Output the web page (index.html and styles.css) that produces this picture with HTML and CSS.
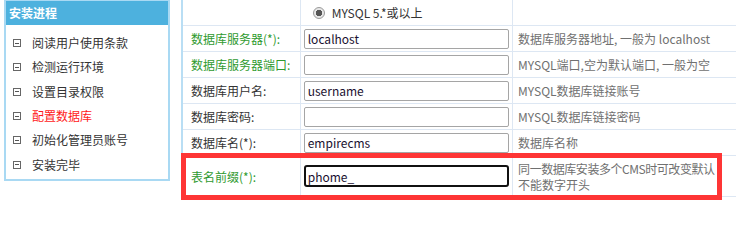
FILE: index.html
```html
<!DOCTYPE html>
<html lang="zh">
<head>
<meta charset="utf-8">
<title>安装进程</title>
<link rel="stylesheet" href="styles.css">
</head>
<body>
<div class="page">
  <aside class="side">
    <div class="side-head">安装进程</div>
    <ul class="steps">
      <li><span class="box"></span>阅读用户使用条款</li>
      <li><span class="box"></span>检测运行环境</li>
      <li><span class="box"></span>设置目录权限</li>
      <li class="cur"><span class="box"></span>配置数据库</li>
      <li><span class="box"></span>初始化管理员账号</li>
      <li><span class="box"></span>安装完毕</li>
    </ul>
  </aside>
  <main class="main">
    <table class="form">
      <colgroup><col class="c1"><col class="c2"><col class="c3"></colgroup>
      <tr class="r-radio">
        <td></td>
        <td class="radio-cell"><span class="radio"></span>MYSQL 5.*或以上</td>
        <td></td>
      </tr>
      <tr>
        <td class="lbl green">数据库服务器(*):</td>
        <td class="inp"><input type="text" value="localhost"></td>
        <td class="desc">数据库服务器地址, 一般为 localhost</td>
      </tr>
      <tr>
        <td class="lbl green">数据库服务器端口:</td>
        <td class="inp"><input type="text" value=""></td>
        <td class="desc">MYSQL端口,空为默认端口, 一般为空</td>
      </tr>
      <tr>
        <td class="lbl">数据库用户名:</td>
        <td class="inp"><input type="text" value="username"></td>
        <td class="desc">MYSQL数据库链接账号</td>
      </tr>
      <tr>
        <td class="lbl">数据库密码:</td>
        <td class="inp"><input type="text" value=""></td>
        <td class="desc">MYSQL数据库链接密码</td>
      </tr>
      <tr>
        <td class="lbl">数据库名(*):</td>
        <td class="inp"><input type="text" value="empirecms"></td>
        <td class="desc">数据库名称</td>
      </tr>
      <tr class="r-prefix">
        <td class="lbl green">表名前缀(*):</td>
        <td class="inp"><input type="text" class="focus" value="phome_"></td>
        <td class="desc"><span class="tight">同一数据库安装多个CMS时可改变默认</span><br>不能数字开头</td>
      </tr>
    </table>
    <div class="mark"></div>
  </main>
</div>
</body>
</html>
```

FILE: styles.css
```css
html, body {
  margin: 0;
  padding: 0;
  background: #fff;
}
body {
  width: 738px;
  height: 201px;
  overflow: hidden;
  font-family: "Noto Sans CJK SC", "Liberation Sans", sans-serif;
  font-size: 12px;
  color: #333;
}
.page {
  display: flex;
  align-items: flex-start;
  padding-left: 4px;
  width: 734px;
  overflow: hidden;
}
.side {
  width: 162px;
  height: 178px;
  border: 2px solid #a9d9f3;
  border-top-width: 1px;
  flex: none;
}
.side-head {
  height: 24px;
  line-height: 24px;
  background: #4db1de;
  color: #fff;
  font-weight: bold;
  padding-left: 3px;
  font-size: 12px;
}
.steps {
  list-style: none;
  margin: 0;
  padding: 6px 0 0 7px;
}
.steps li {
  height: 24.3px;
  line-height: 24px;
  display: flex;
  align-items: center;
  color: #333;
}
.steps li.cur {
  color: #ff1a1a;
}
.box {
  width: 6px;
  height: 6px;
  border: 1px solid #666;
  margin-right: 11px;
  position: relative;
  flex: none;
}
.box::after {
  content: "";
  position: absolute;
  left: 1px;
  right: 1px;
  top: 2.5px;
  height: 1px;
  background: #555;
}
.main {
  position: relative;
  margin-left: 11px;
  flex: none;
  width: 555px;
  height: 201px;
  overflow: hidden;
}
.form {
  border-collapse: collapse;
  border-left: 2px solid #b9def4;
  width: 555px;
  table-layout: fixed;
}
.c1 { width: 118px; }
.c2 { width: 212px; }
.c3 { width: 223px; }
.form td {
  border: 1px solid #dde7f3;
  height: 25px;
  padding: 0;
  vertical-align: middle;
  white-space: nowrap;
  overflow: hidden;
}
.form tr:first-child td {
  border-top: none;
}
.form td:first-child {
  border-left: none;
}
.form td:last-child {
  border-right: none;
}
.lbl {
  padding-left: 8px !important;
  color: #333;
}
.lbl.green {
  color: #2f9a2f;
}
.inp {
  padding-left: 3px !important;
}
.inp input {
  box-sizing: border-box;
  width: 205px;
  height: 20px;
  border: 1px solid #a5a5a5;
  border-radius: 2px;
  padding: 0 3px;
  margin: 0;
  font-family: "Noto Sans CJK SC", "Liberation Sans", sans-serif;
  font-size: 12px;
  color: #1a1030;
  display: block;
  outline: none;
}
.inp input.focus {
  border: 2px solid #111;
  border-radius: 3px;
  height: 22px;
  padding: 0 2px;
}
.desc {
  padding-left: 5px !important;
  color: #707070;
}
.tight {
  letter-spacing: -0.45px;
}
.r-radio td {
  height: 25px;
}
.radio-cell {
  padding-left: 12px !important;
  color: #333;
}
.radio {
  display: inline-block;
  width: 10px;
  height: 10px;
  border: 1px solid #9a9a9a;
  border-radius: 50%;
  background: radial-gradient(circle, #555 0 3px, #e6e6e6 3.5px);
  vertical-align: -1px;
  margin-right: 7px;
}
.r-prefix td {
  height: 39px;
}
.r-prefix .desc {
  line-height: 16px;
  padding-top: 1px !important;
}
.mark {
  position: absolute;
  left: 0;
  top: 153px;
  width: 531px;
  height: 37px;
  border: 5px solid #fe3535;
  pointer-events: none;
}
```
